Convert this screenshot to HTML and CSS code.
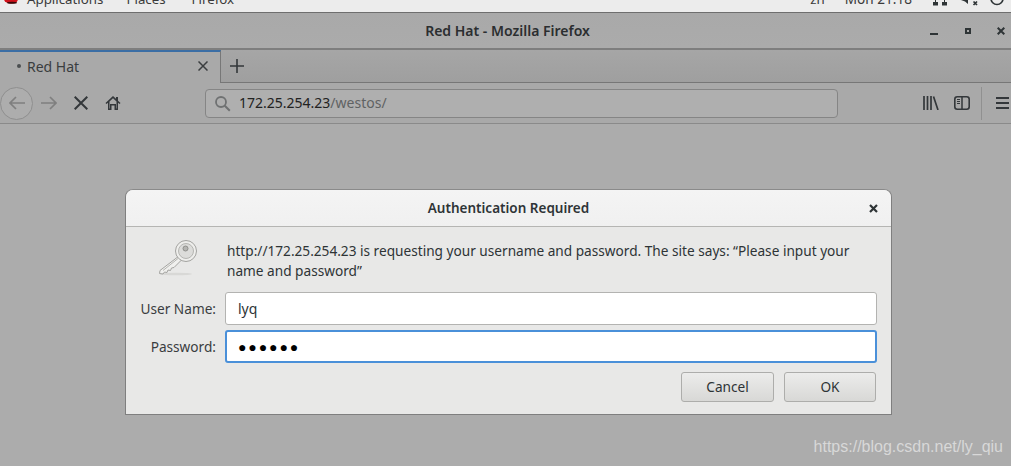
FILE: index.html
```html
<!DOCTYPE html>
<html lang="en">
<head>
<meta charset="utf-8">
<title>Red Hat - Mozilla Firefox</title>
<link rel="stylesheet" href="styles.css">
</head>
<body>
<div class="panel">
  <div class="panel-left">
    <svg class="redhat" width="16" height="12" viewBox="0 0 16 12"><ellipse cx="8" cy="-1" rx="7" ry="4.600" fill="#d0101a"/><ellipse cx="9" cy="2.700" rx="5" ry="1" fill="#3a0808"/></svg>
    <span class="m-app">Applications</span><span class="m-places">Places</span><span class="m-ff">Firefox</span>
  </div>
  <div class="panel-right">
    <span class="m-zh">zh</span><span class="m-clock">Mon 21:18</span>
    <svg class="tray" width="66" height="12" viewBox="0 0 66 12">
      <path d="M11 2h2V0h1v2h2v3.500h-5zM20 2h2V0h1v2h2v3.500h-5z" fill="#2e3436"/>
      <path d="M46 0v4l-3-2.500L39 0z" fill="#2e3436"/>
      <path d="M51.500 1.500l3.500 3.500m0-3.500l-3.500 3.500" stroke="#2e3436" stroke-width="1.700" fill="none"/>
    </svg>
    <svg class="power" width="14" height="12" viewBox="0 0 14 12"><path d="M1 -1.500a6 6 0 0 0 12 0" fill="none" stroke="#2e3436" stroke-width="1.700"/></svg>
  </div>
</div>
<div class="titlebar">
  <div class="title">Red Hat - Mozilla Firefox</div>
  <div class="wm">
    <svg width="9" height="8" viewBox="0 0 9 8"><rect y="6" width="8" height="2" fill="#2e3436"/></svg>
    <svg width="6" height="6" viewBox="0 0 6 6"><path d="M0 0h6v6h-6zM2 2v2h2v-2z" fill="#2e3436" fill-rule="evenodd"/></svg>
    <svg width="8" height="8" viewBox="0 0 8 8"><path d="M0.700 0.700l6.600 6.600m0-6.600l-6.600 6.600" stroke="#2e3436" stroke-width="2"/></svg>
  </div>
</div>
<div class="tabbar">
  <div class="tab">
    <span class="tab-dot"></span>
    <span class="tab-label">Red Hat</span>
    <svg class="tab-close" width="10" height="10" viewBox="0 0 10 10"><path d="M0.500 0.500l9 9m0-9l-9 9" stroke="#3a3d3f" stroke-width="1.500"/></svg>
  </div>
  <svg class="newtab" width="14" height="14" viewBox="0 0 14 14"><path d="M7 0v14M0 7h14" stroke="#33373a" stroke-width="1.600"/></svg>
</div>
<div class="navbar">
  <div class="back">
    <svg width="16" height="14" viewBox="0 0 16 14"><path d="M7 1L1 7l6 6M1 7h15" fill="none" stroke="#7f7f7f" stroke-width="1.700"/></svg>
  </div>
  <svg class="forward" width="16" height="14" viewBox="0 0 16 14"><path d="M9 1l6 6-6 6M15 7H0" fill="none" stroke="#7f7f7f" stroke-width="1.700"/></svg>
  <svg class="stop" width="14" height="14" viewBox="0 0 14 14"><path d="M0.700 0.700l12.600 12.600m0-12.600L0.700 13.300" stroke="#33373a" stroke-width="2"/></svg>
  <svg class="home" width="16" height="16" viewBox="0 0 16 16"><path d="M8 1L0.500 8l1 1L3 7.800V15h3.500v-4.500h3V15H13V7.800L14.500 9l1-1-2.500-2.300V2h-2v1.800z M8 3.200l3.500 3.300V13.500h-.5v-4.500H5v4.500h-.5V6.500z" fill="#33373a" fill-rule="evenodd"/></svg>
  <div class="urlbar">
    <svg width="17" height="17" viewBox="0 0 17 17"><circle cx="7" cy="7" r="5" fill="none" stroke="#6f7172" stroke-width="1.800"/><path d="M10.800 10.800l5 5" stroke="#6f7172" stroke-width="2"/></svg>
    <span class="url"><span class="url-host">172.25.254.23</span><span class="url-path">/westos/</span></span>
  </div>
  <div class="nav-right">
    <svg class="library" width="16" height="14" viewBox="0 0 16 14"><path d="M1 0v14M4.500 0v14M8 0v14M10.500 0.500l4.500 13.500" stroke="#33373a" stroke-width="1.700" fill="none"/></svg>
    <svg class="sidebar" width="16" height="14" viewBox="0 0 16 14"><rect x="0.800" y="0.800" width="14.400" height="12.400" rx="2.500" fill="none" stroke="#33373a" stroke-width="1.600"/><path d="M8 1v12" stroke="#33373a" stroke-width="1.500"/><path d="M3 3.500h3M3 5.500h3M3 7.500h3" stroke="#33373a"/></svg>
    <span class="sep"></span>
    <svg class="menu" width="13" height="12" viewBox="0 0 13 12"><path d="M0 1h13M0 6h13M0 11h13" stroke="#33373a" stroke-width="2"/></svg>
  </div>
</div>
<main class="content">
  <section class="dialog">
    <header class="dlg-head">
      <h1 class="dlg-title">Authentication Required</h1>
      <svg class="dlg-close" width="9" height="9" viewBox="0 0 9 9"><path d="M1 1l7 7m0-7l-7 7" stroke="#2e3436" stroke-width="2.200"/></svg>
    </header>
    <div class="dlg-body">
      <div class="dlg-intro">
        <svg class="key" width="40" height="40" viewBox="0 0 40 40">
          <ellipse cx="18" cy="34" rx="16" ry="1.300" fill="#d8d8d6"/>
          <path d="M21 16L2 30.500 1.500 33.500 5 34l1.500-2 2.500.5 1-2.500 2.500.5 1-2.500 2.500-.5 7-7z" fill="#f0f0ee" stroke="#a3a3a0" stroke-linejoin="round"/>
          <path d="M5 30.500L20 18.500" stroke="#b5b5b2" fill="none"/>
          <circle cx="28" cy="11" r="10.500" fill="#eeeeec" stroke="#a3a3a0"/>
          <circle cx="28" cy="11" r="7.500" fill="#dcdcda" stroke="#b5b5b2"/>
          <circle cx="27.500" cy="8.500" r="2.500" fill="#b5b5b2" stroke="#8f8f8c"/>
        </svg>
        <p class="dlg-text">http://172.25.254.23 is requesting your username and password. The site says: “Please input your name and password”</p>
      </div>
      <div class="dlg-form">
        <label class="dlg-label" for="u">User Name:</label>
        <input class="dlg-input" id="u" type="text" value="lyq">
        <label class="dlg-label" for="p">Password:</label>
        <input class="dlg-input dlg-input-focus" id="p" type="text" value="●●●●●●">
      </div>
      <div class="dlg-actions">
        <button class="btn" type="button">Cancel</button>
        <button class="btn btn-ok" type="button">OK</button>
      </div>
    </div>
  </section>
  <div class="watermark">https://blog.csdn.net/ly_qiu</div>
</main>
</body>
</html>
```

FILE: styles.css
```css
* { box-sizing: border-box; }
html, body { margin: 0; padding: 0; }
body {
  width: 1011px;
  height: 466px;
  overflow: hidden;
  background: #acacac;
  font-family: "Noto Sans", "Open Sans", sans-serif;
  font-size: 14px;
  color: #2e3436;
  display: flex;
  flex-direction: column;
}
svg { display: block; flex: none; }

.panel {
  height: 13px;
  flex: none;
  background: #ececec;
  border-bottom: 1px solid #6e6e6e;
  display: flex;
  justify-content: space-between;
  overflow: hidden;
  font-size: 13.3px;
}
.panel-left, .panel-right { display: flex; align-items: flex-end; height: 12px; }
.panel-left span, .panel-right span { line-height: 20px; margin-bottom: 3px; color: #3a3a3a; flex: none; }
.redhat { margin: 0 8px 0 3px; }
.m-places { margin-left: 23px; }
.m-ff { margin-left: 26px; }
.m-zh { margin-right: 20px; }
.m-clock { margin-right: 10px; font-size: 13.6px; }
.power { margin-right: 7px; margin-left: 2px; }

.titlebar {
  height: 37px;
  flex: none;
  background: linear-gradient(#a9a9a9, #ababab);
  border-bottom: 2px solid #7e7e7e;
  display: flex;
  align-items: center;
  justify-content: center;
  padding-left: 4px;
  position: relative;
}
.title { font-size: 14px; font-weight: 600; color: #2b2e30; }
.wm {
  position: absolute;
  right: 6px;
  top: 14px;
  display: flex;
  align-items: center;
  gap: 26px;
}

.tabbar {
  height: 33px;
  flex: none;
  background: linear-gradient(#a6a6a6, #9f9f9f);
  border-bottom: 1px solid #777;
  display: flex;
  align-items: center;
}
.tab {
  width: 221px;
  height: 33px;
  margin-top: 1px;
  background: #a9a9a9;
  border-top: 2px solid #3b6ea5;
  border-right: 1px solid #777;
  display: flex;
  align-items: center;
  padding: 0 0 3px 17px;
}
.tab-dot { width: 4px; height: 4px; border-radius: 50%; background: #4b4e50; margin-right: 6px; }
.tab-label { flex: 1; color: #3a3d3f; }
.tab-close { margin-right: 12px; }
.newtab { margin-left: 9px; }

.navbar {
  height: 41px;
  flex: none;
  background: #a9a9a9;
  border-bottom: 1px solid #8a8a8a;
  display: flex;
  align-items: center;
}
.back {
  width: 33px;
  height: 33px;
  border: 1px solid #8f8f8f;
  border-radius: 50%;
  background: #adadad;
  display: flex;
  align-items: center;
  justify-content: center;
  flex: none;
}
.forward { margin-left: 8px; }
.stop { margin-left: 17px; }
.home { margin-left: 17px; }
.urlbar {
  width: 633px;
  height: 29px;
  margin-left: 84px;
  background: #afafaf;
  border: 1px solid #858585;
  border-radius: 4px;
  display: flex;
  align-items: center;
  padding-left: 8px;
  flex: none;
}
.url { margin: -2px 0 0 8px; font-size: 14px; }
.url-host { color: #222; }
.url-path { color: #5f6263; }
.nav-right { display: flex; align-items: center; margin-left: 85px; }
.sidebar { margin-left: 15px; }
.sep { width: 1px; height: 33px; background: #909090; margin-left: 11px; }
.menu { margin-left: 14px; }

.content {
  flex: 1;
  position: relative;
  padding: 65px 0 0 125px;
}
.dialog {
  width: 767px;
  height: 226px;
  background: #e8e8e7;
  border: 1px solid #7f7f7f;
  border-top-color: #8a8a8a;
  border-radius: 8px 8px 0 0;
  overflow: hidden;
}
.dlg-head {
  height: 37px;
  background: linear-gradient(#f4f4f4, #f0f0f0);
  border-bottom: 1px solid #b5b5b3;
  display: flex;
  align-items: center;
  justify-content: center;
  position: relative;
}
.dlg-title { margin: 0; font-size: 13.5px; font-weight: 600; color: #2e3436; }
.dlg-close { position: absolute; right: 13px; top: 14px; }
.dlg-body { padding: 13px 13px 0 14px; font-size: 13.65px; }
.dlg-intro { display: flex; align-items: flex-start; height: 52px; }
.key { margin-left: 18px; }
.dlg-text { margin: 1px 0 0 29px; width: 640px; line-height: 20px; color: #2e3436; }
.dlg-form {
  display: grid;
  grid-template-columns: 76px 652px;
  column-gap: 9px;
  row-gap: 5px;
  align-items: center;
}
.dlg-label { text-align: right; color: #3a3d3f; white-space: nowrap; }
.dlg-input {
  width: 652px;
  height: 33px;
  background: #fff;
  border: 1px solid #b3b3b1;
  border-radius: 3px;
  padding: 0 12px;
  font: 14px "Noto Sans", sans-serif;
  color: #2e3436;
  outline: none;
}
.dlg-input-focus {
  height: 33px;
  border: 2px solid #4a90d9;
  color: #000;
  padding: 0 11px;
  font-size: 14px;
  letter-spacing: 1.9px;
}
.dlg-actions {
  display: flex;
  justify-content: flex-end;
  gap: 10px;
  margin-top: 9px;
  margin-right: 2px;
}
.btn {
  width: 93px;
  height: 30px;
  border: 1px solid #adadab;
  border-radius: 3px;
  background: linear-gradient(#ececeb, #d8d8d6);
  font: 13.65px "Noto Sans", sans-serif;
  color: #2e3436;
  padding: 0 0 2px;
}
.btn-ok { width: 92px; }
.watermark {
  position: absolute;
  right: 8px;
  bottom: 10px;
  font-family: "Liberation Sans", Arial, sans-serif;
  font-size: 16px;
  color: #d8d8d8;
}
```
